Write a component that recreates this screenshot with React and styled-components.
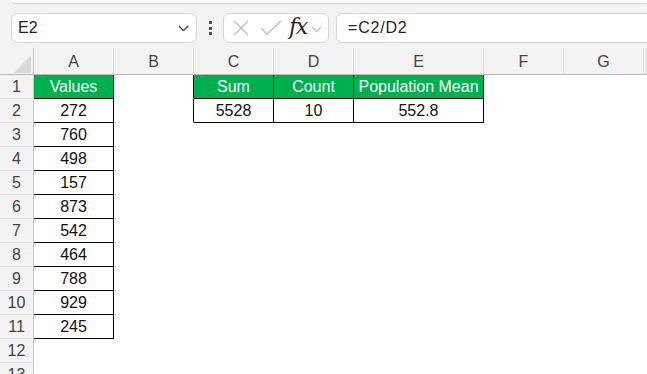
import React from "react";
import styled, { createGlobalStyle } from "styled-components";

const Global = createGlobalStyle`
  html, body { margin: 0; padding: 0; background: #f3f3f3; }
  body { font-family: "Liberation Sans", Arial, sans-serif; }
  * { box-sizing: border-box; }
`;

const Page = styled.div`
  width: 647px;
  height: 374px;
  overflow: hidden;
  background: #f3f3f3;
  display: flex;
  flex-direction: column;
  & > * { flex-shrink: 0; }
`;

const TopStrip = styled.div`
  height: 3px;
  margin-left: 12px;
  background: #ffffff;
  border-bottom-left-radius: 6px;
  box-shadow: 0 1px 2px rgba(0, 0, 0, 0.12);
`;

const FormulaRow = styled.div`
  display: flex;
  align-items: stretch;
  height: 30px;
  margin-top: 10px;
  margin-bottom: 5px;
  padding-left: 11px;
  margin-right: -12px;
`;

const Box = styled.div`
  background: #ffffff;
  border: 1px solid #d6d6d6;
  border-radius: 6px;
  display: flex;
  align-items: center;
`;

const NameBox = styled(Box)`
  width: 186px;
  padding: 0 7px 0 6px;
  justify-content: space-between;
  font-size: 16px;
  color: #1f1f1f;
`;

const Dots = styled.div`
  width: 26px;
  display: flex;
  flex-direction: column;
  align-items: center;
  justify-content: center;
  gap: 2.5px;
  span {
    width: 3px;
    height: 3px;
    background: #505050;
  }
`;

const IconBox = styled(Box)`
  width: 106px;
  padding: 0 4px 0 7px;
`;

const Fx = styled.span`
  font-family: "DejaVu Serif", "Liberation Serif", serif;
  font-style: italic;
  font-size: 22px;
  color: #262626;
  margin-left: 7px;
  letter-spacing: -1.5px;
  line-height: 1;
  padding-bottom: 3px;
`;

const FormulaInput = styled(Box)`
  flex: 1;
  margin-left: 7px;
  padding-left: 11px;
  font-size: 16px;
  letter-spacing: 0.8px;
  color: #1f1f1f;
`;

const Sheet = styled.div`
  display: grid;
  grid-template-columns: 34px 80px 80px 80px 80px 130px 80px 80px 1fr;
  grid-template-rows: 27px;
  grid-auto-rows: 24px;
  background: #ffffff;
`;

const Corner = styled.div`
  background: #f3f3f3;
  border-right: 1px solid #c8c8c8;
  border-bottom: 1px solid #b9b9b9;
  display: flex;
  align-items: flex-end;
  justify-content: flex-end;
  padding: 0 2px 1px 0;
`;

const ColHead = styled.div`
  background: #f3f3f3;
  border-right: 1px solid #dcdcdc;
  border-bottom: 1px solid #b9b9b9;
  display: flex;
  align-items: center;
  justify-content: center;
  padding-top: 2px;
  font-size: 16px;
  color: #444444;
`;

const RowHead = styled.div`
  background: #f3f3f3;
  border-right: 1px solid #c8c8c8;
  border-bottom: 1px solid #e2e2e2;
  display: flex;
  align-items: center;
  justify-content: center;
  font-size: 16px;
  color: #444444;
`;

const Cell = styled.div`
  background: ${(p) => p.$bg || "#ffffff"};
  color: ${(p) => p.$color || "#111111"};
  border-right: 1px solid ${(p) => p.$right || "transparent"};
  border-bottom: 1px solid ${(p) => p.$bottom || "transparent"};
  display: flex;
  align-items: center;
  justify-content: center;
  font-size: 16px;
  white-space: nowrap;
`;

const Chevron = ({ size = 12, color = "#333", width = 1.3 }) => (
  <svg width={size} height={size * 0.6} viewBox="0 0 12 7">
    <polyline points="1,1 6,6 11,1" fill="none" stroke={color} strokeWidth={width} />
  </svg>
);

const XIcon = () => (
  <svg width="18" height="18" viewBox="0 0 18 18" style={{ marginLeft: 1 }}>
    <line x1="2" y1="2" x2="16" y2="16" stroke="#bdbdbd" strokeWidth="1.3" />
    <line x1="16" y1="2" x2="2" y2="16" stroke="#bdbdbd" strokeWidth="1.3" />
  </svg>
);

const CheckIcon = () => (
  <svg width="22" height="16" viewBox="0 0 22 16" style={{ marginLeft: 10 }}>
    <polyline points="1,8 7,14 21,1" fill="none" stroke="#bdbdbd" strokeWidth="1.3" />
  </svg>
);

const Triangle = () => (
  <svg width="17" height="18" viewBox="0 0 17 18">
    <polygon points="17,0 17,18 0,18" fill="#d9d9d9" />
  </svg>
);

const GREEN = "#00b050";
const BLACK = "#000000";
const cols = ["A", "B", "C", "D", "E", "F", "G", ""];
const values = [272, 760, 498, 157, 873, 542, 464, 788, 929, 245];

function cellProps(r, c) {
  if (c === 0 && r >= 1 && r <= 11) {
    if (r === 1) return { $bg: GREEN, $color: "#ffffff", $right: BLACK, $bottom: BLACK, text: "Values" };
    return { $right: BLACK, $bottom: BLACK, text: values[r - 2] };
  }
  if (r <= 2) {
    if (c === 1) return { $right: BLACK };
    const head = { 2: "Sum", 3: "Count", 4: "Population Mean" };
    const val = { 2: "5528", 3: "10", 4: "552.8" };
    if (c >= 2 && c <= 4) {
      if (r === 1) return { $bg: GREEN, $color: "#ffffff", $right: BLACK, $bottom: BLACK, text: head[c] };
      return { $right: BLACK, $bottom: BLACK, text: val[c] };
    }
  }
  return {};
}

export default function App() {
  const rows = Array.from({ length: 13 }, (_, i) => i + 1);
  return (
    <Page>
      <Global />
      <TopStrip />
      <FormulaRow>
        <NameBox>
          <span>E2</span>
          <Chevron size={11} color="#333" width={1.4} />
        </NameBox>
        <Dots>
          <span />
          <span />
          <span />
        </Dots>
        <IconBox>
          <XIcon />
          <CheckIcon />
          <Fx>fx</Fx>
          <span style={{ marginLeft: 4 }}>
            <Chevron size={11} color="#a8a8a8" width={1.1} />
          </span>
        </IconBox>
        <FormulaInput>=C2/D2</FormulaInput>
      </FormulaRow>
      <Sheet>
        <Corner>
          <Triangle />
        </Corner>
        {cols.map((c, i) => (
          <ColHead key={i}>{c}</ColHead>
        ))}
        {rows.map((r) => (
          <React.Fragment key={r}>
            <RowHead>{r}</RowHead>
            {cols.map((_, c) => {
              const { text, ...p } = cellProps(r, c);
              return (
                <Cell key={c} {...p}>
                  {text}
                </Cell>
              );
            })}
          </React.Fragment>
        ))}
      </Sheet>
    </Page>
  );
}
